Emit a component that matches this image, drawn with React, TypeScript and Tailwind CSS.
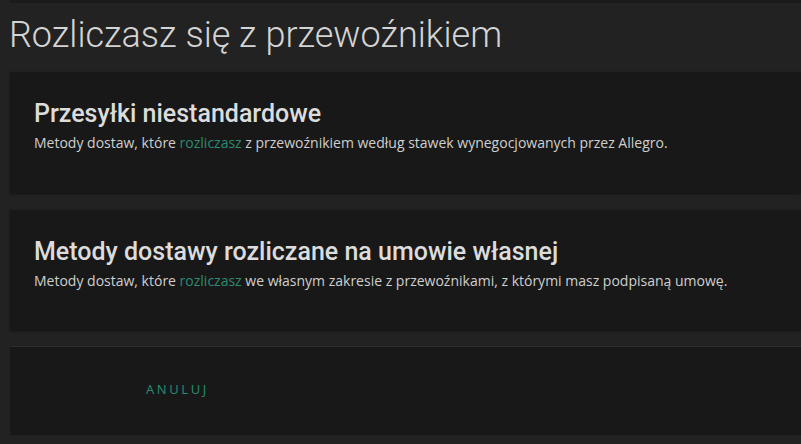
import React from 'react';

interface MethodCardProps {
  title: string;
  before: string;
  after: string;
  height: string;
}

function MethodCard({ title, before, after, height }: MethodCardProps) {
  return (
    <div className={`bg-[#181818] pl-[24px] pt-[26px] shadow-[0_1px_2px_rgba(0,0,0,0.5)] ${height}`}>
      <h2 className="font-['Roboto'] font-medium text-[25px] leading-[32px] text-[#dcdcdc]">{title}</h2>
      <p className="mt-[3px] font-['Open_Sans'] text-[14px] leading-[20px] text-[#cfcfcf]">
        {before} <span className="text-[#2a8c72]">rozliczasz</span> {after}
      </p>
    </div>
  );
}

export default function App() {
  return (
    <div className="w-[801px] h-[444px] overflow-hidden bg-[#222222] pl-[10px]">
      <div className="h-[3px] bg-[#1a1a1a]" />
      <h1 className="pt-[11px] font-['Roboto'] font-light text-[36px] leading-[42px] text-[#d4d4d4] -ml-[1px]">
        Rozliczasz się z przewoźnikiem
      </h1>
      <div className="mt-[16px] flex flex-col">
        <MethodCard
          height="h-[121px]"
          title="Przesyłki niestandardowe"
          before="Metody dostaw, które"
          after="z przewoźnikiem według stawek wynegocjowanych przez Allegro."
        />
        <div className="h-[17px]" />
        <MethodCard
          height="h-[120px]"
          title="Metody dostawy rozliczane na umowie własnej"
          before="Metody dostaw, które"
          after="we własnym zakresie z przewoźnikami, z którymi masz podpisaną umowę."
        />
        <div className="h-[16px]" />
        <div className="bg-[#181818] h-[89px] border-t border-[#2c2c2c] flex items-center pl-[136px] pb-[2px]">
          <button className="font-['Open_Sans'] text-[13px] tracking-[0.2em] text-[#2a8c72]">ANULUJ</button>
        </div>
      </div>
    </div>
  );
}
